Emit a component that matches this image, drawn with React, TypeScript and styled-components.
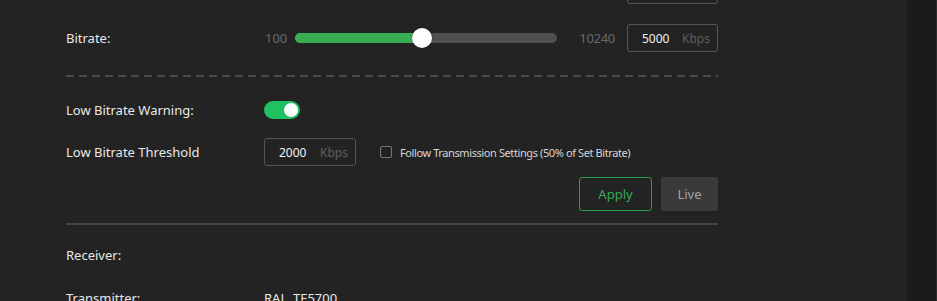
import React, { useState } from 'react'
import styled, { createGlobalStyle } from 'styled-components'

const GlobalStyle = createGlobalStyle`
    html, body {
        margin: 0;
        padding: 0;
        background: #232323;
        overflow: hidden;
    }
    body {
        font-family: "Noto Sans", "Open Sans", sans-serif;
        color: #e6e6e6;
    }
`

const MIN = 100
const MAX = 10240

export default function App() {
    const [bitrate] = useState(5000)
    const [warning, setWarning] = useState(true)
    const [follow, setFollow] = useState(false)

    const pct = ((bitrate - MIN) / (MAX - MIN)) * 100

    return (
        <>
            <GlobalStyle />
            <Page>
                <Main>
                    <Content>
                        {/* previous row, scrolled mostly out of view */}
                        <Row>
                            <Label />
                            <Controls>
                                <Spacer />
                                <UnitInput />
                            </Controls>
                        </Row>
                        <Row>
                            <Label>Bitrate:</Label>
                            <Controls>
                                <RangeText>{MIN}</RangeText>
                                <Track>
                                    <Fill style={{ width: `${pct}%` }} />
                                    <Thumb style={{ left: `${pct}%` }} />
                                </Track>
                                <RangeText $right>{MAX}</RangeText>
                                <UnitInput>
                                    <Value>{bitrate}</Value>
                                    <Unit>Kbps</Unit>
                                </UnitInput>
                            </Controls>
                        </Row>
                        <DashedLine />
                        <Row $top={19}>
                            <Label>Low Bitrate Warning:</Label>
                            <Toggle $on={warning} onClick={() => setWarning(!warning)}>
                                <Knob $on={warning} />
                            </Toggle>
                        </Row>
                        <Row $top={14}>
                            <Label>Low Bitrate Threshold</Label>
                            <UnitInput $width={92}>
                                <Value>2000</Value>
                                <Unit>Kbps</Unit>
                            </UnitInput>
                            <CheckLabel onClick={() => setFollow(!follow)}>
                                <Box $checked={follow} />
                                Follow Transmission Settings (50% of Set Bitrate)
                            </CheckLabel>
                        </Row>
                        <Actions>
                            <ApplyButton>Apply</ApplyButton>
                            <LiveButton>Live</LiveButton>
                        </Actions>
                        <SolidLine />
                        <InfoRow>
                            <Label>Receiver:</Label>
                        </InfoRow>
                        <InfoRow>
                            <Label>Transmitter:</Label>
                            <InfoValue>RAL_TE5700</InfoValue>
                        </InfoRow>
                    </Content>
                </Main>
                <Side />
            </Page>
        </>
    )
}

const Page = styled.div`
    display: flex;
    width: 937px;
    height: 301px;
    overflow: hidden;
`

const Main = styled.div`
    flex: 1;
    background: #232323;
`

const Side = styled.div`
    width: 29px;
    background: #1b1b1b;
    border-right: 1px solid #2b2b2b;
`

const Content = styled.div`
    width: 652px;
    margin-left: 66px;
    margin-top: -24px;
    display: flex;
    flex-direction: column;
`

const Row = styled.div<{ $top?: number }>`
    display: flex;
    align-items: center;
    height: 28px;
    margin-top: ${p => p.$top ?? 20}px;
    &:first-child {
        margin-top: 0;
    }
`

const Label = styled.div`
    width: 198px;
    flex-shrink: 0;
    font-size: 13px;
    color: #e8e8e8;
`

const Controls = styled.div`
    flex: 1;
    display: flex;
    align-items: center;
`

const Spacer = styled.div`
    flex: 1;
`

const RangeText = styled.span<{ $right?: boolean }>`
    font-size: 13px;
    color: #686868;
    margin-left: ${p => (p.$right ? '22px' : '1px')};
    margin-right: ${p => (p.$right ? '12px' : '8px')};
    letter-spacing: ${p => (p.$right ? '-0.3px' : '0')};
`

const Track = styled.div`
    position: relative;
    flex: 1;
    height: 10px;
    border-radius: 5px;
    background: #505050;
`

const Fill = styled.div`
    height: 100%;
    border-radius: 5px;
    background: #38ad52;
`

const Thumb = styled.div`
    position: absolute;
    top: 50%;
    width: 20px;
    height: 20px;
    border-radius: 50%;
    background: #ffffff;
    transform: translate(-50%, -50%);
    box-shadow: 0 0 2px rgba(0, 0, 0, 0.4);
`

const UnitInput = styled.div<{ $width?: number }>`
    box-sizing: border-box;
    width: ${p => p.$width ?? 91}px;
    height: 28px;
    border: 1px solid #565656;
    border-radius: 3px;
    display: flex;
    align-items: center;
    justify-content: space-between;
    padding: 0 7px 0 14px;
    font-size: 12px;
`

const Value = styled.span`
    color: #f2f2f2;
`

const Unit = styled.span`
    color: #5e5e5e;
`

const DashedLine = styled.div`
    height: 2px;
    margin-top: 23px;
    background: repeating-linear-gradient(to right, #4a4a4a 0 8px, transparent 8px 13px);
`

const Toggle = styled.div<{ $on: boolean }>`
    position: relative;
    width: 36px;
    height: 18px;
    border-radius: 9px;
    background: ${p => (p.$on ? '#1fc162' : '#555')};
    cursor: pointer;
`

const Knob = styled.div<{ $on: boolean }>`
    position: absolute;
    top: 2px;
    left: ${p => (p.$on ? '20px' : '2px')};
    width: 14px;
    height: 14px;
    border-radius: 50%;
    background: #ffffff;
`

const CheckLabel = styled.label`
    display: flex;
    align-items: center;
    margin-left: 24px;
    font-size: 11px;
    letter-spacing: -0.4px;
    color: #d6d6d6;
    cursor: pointer;
`

const Box = styled.span<{ $checked: boolean }>`
    box-sizing: border-box;
    width: 12px;
    height: 12px;
    margin-right: 8px;
    border: 1px solid #777;
    border-radius: 2px;
    background: ${p => (p.$checked ? '#38ad52' : 'transparent')};
`

const Actions = styled.div`
    display: flex;
    justify-content: flex-end;
    gap: 9px;
    margin-top: 11px;
`

const ButtonBase = styled.button`
    box-sizing: border-box;
    height: 34px;
    border-radius: 3px;
    font-family: inherit;
    font-size: 13px;
    cursor: pointer;
`

const ApplyButton = styled(ButtonBase)`
    width: 73px;
    background: transparent;
    border: 1px solid #2a9c48;
    color: #36a853;
`

const LiveButton = styled(ButtonBase)`
    width: 57px;
    background: #3a3a3a;
    border: none;
    color: #a3a3a3;
`

const SolidLine = styled.div`
    height: 2px;
    margin-top: 12px;
    background: #444;
`

const InfoRow = styled.div`
    display: flex;
    align-items: center;
    height: 28px;
    margin-top: 16px;
    & + & {
        margin-top: 15px;
    }
`

const InfoValue = styled.div`
    font-size: 13px;
    color: #e8e8e8;
`
